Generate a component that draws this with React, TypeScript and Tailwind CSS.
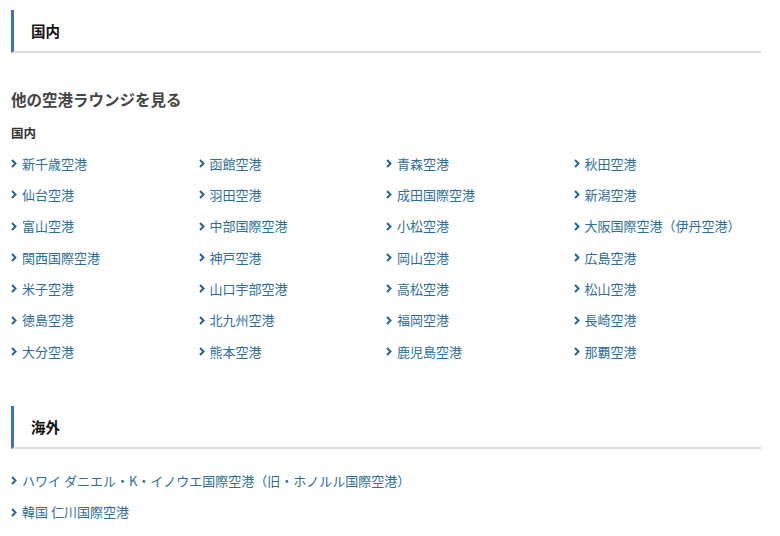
import React from "react";

const domestic = [
  "新千歳空港", "函館空港", "青森空港", "秋田空港",
  "仙台空港", "羽田空港", "成田国際空港", "新潟空港",
  "富山空港", "中部国際空港", "小松空港", "大阪国際空港（伊丹空港）",
  "関西国際空港", "神戸空港", "岡山空港", "広島空港",
  "米子空港", "山口宇部空港", "高松空港", "松山空港",
  "徳島空港", "北九州空港", "福岡空港", "長崎空港",
  "大分空港", "熊本空港", "鹿児島空港", "那覇空港",
];

const overseas = [
  "ハワイ ダニエル・K・イノウエ国際空港（旧・ホノルル国際空港）",
  "韓国 仁川国際空港",
];

function Chevron() {
  return (
    <svg width="6" height="9" viewBox="0 0 6 9" className="shrink-0 mr-[5px]">
      <path d="M1 1 L4.5 4.5 L1 8" fill="none" stroke="#24668f" strokeWidth="2" />
    </svg>
  );
}

function LinkItem({ label }: { label: string }) {
  return (
    <a className="flex items-center h-[31.3px] text-[13px] text-[#2d6e98] whitespace-nowrap">
      <Chevron />
      <span>{label}</span>
    </a>
  );
}

function SectionHeading({ title }: { title: string }) {
  return (
    <div className="flex items-center h-[43px] border-l-[3px] border-[#3f6fbf] border-b-2 border-b-[#dddddd] pl-[17px]">
      <h2 className="text-[14.5px] font-bold text-[#111]">{title}</h2>
    </div>
  );
}

export default function App() {
  return (
    <div
      className="bg-white w-[780px] h-[536px] overflow-hidden pl-[11px] pr-[19px] pt-[10px]"
      style={{ fontFamily: '"Noto Sans CJK JP", "Noto Sans", sans-serif' }}
    >
      <SectionHeading title="国内" />
      <div className="mt-[34px] text-[15.5px] font-bold text-[#444] leading-[24px]">他の空港ラウンジを見る</div>
      <div className="mt-[13px] text-[12.5px] font-bold text-[#333] leading-[18px]">国内</div>
      <div className="grid grid-cols-4 mt-[6px]">
        {domestic.map((d) => (
          <LinkItem key={d} label={d} />
        ))}
      </div>
      <div className="mt-[39px]">
        <SectionHeading title="海外" />
      </div>
      <div className="mt-[16px]">
        {overseas.map((d) => (
          <LinkItem key={d} label={d} />
        ))}
      </div>
    </div>
  );
}
